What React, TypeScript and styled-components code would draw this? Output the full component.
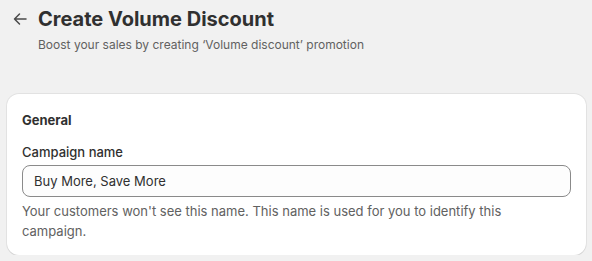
import styled, { createGlobalStyle } from "styled-components";

const GlobalStyle = createGlobalStyle`
  html, body {
    margin: 0;
    padding: 0;
    background: #f1f1f1;
    font-family: Inter, "Noto Sans", sans-serif;
    color: #303030;
  }
`;

const Page = styled.div`
  padding: 7px 6px 0 7px;
`;

const Header = styled.div`
  display: flex;
  align-items: flex-start;
  gap: 11px;
  margin-bottom: 39px;
  padding-left: 6px;
`;

const BackButton = styled.button`
  display: flex;
  align-items: center;
  justify-content: center;
  width: 14px;
  height: 24px;
  padding: 0;
  border: none;
  background: none;
  color: #4a4a4a;
  cursor: pointer;
`;

const TitleBlock = styled.div`
  display: flex;
  flex-direction: column;
`;

const Title = styled.h1`
  margin: 0;
  font-size: 20px;
  line-height: 24px;
  font-weight: 700;
  color: #303030;
`;

const Subtitle = styled.p`
  margin: 4px 0 0;
  font-size: 12px;
  line-height: 20px;
  color: #616161;
`;

const Card = styled.section`
  background: #fff;
  border-radius: 12px;
  box-shadow: 0 1px 0 0 rgba(26, 26, 26, 0.07), 0 0 0 1px rgba(0, 0, 0, 0.06);
  padding: 16px 15px 14px;
`;

const CardTitle = styled.h2`
  margin: 0 0 12px;
  font-size: 13px;
  line-height: 20px;
  font-weight: 650;
  color: #303030;
`;

const Label = styled.label`
  display: block;
  margin-bottom: 3px;
  font-size: 13px;
  line-height: 20px;
  font-weight: 550;
  color: #303030;
`;

const Input = styled.input`
  box-sizing: border-box;
  width: 100%;
  height: 32px;
  padding: 0 11px;
  border: 1px solid #8a8a8a;
  border-radius: 8px;
  background: #fdfdfd;
  font-family: inherit;
  font-size: 13px;
  color: #303030;
  outline: none;
`;

const HelpText = styled.p`
  max-width: 520px;
  margin: 4px 0 0;
  font-size: 13px;
  line-height: 20px;
  color: #616161;
`;

const ArrowLeft = () => (
  <svg width="14" height="14" viewBox="0 0 14 14" fill="none">
    <path
      d="M13 7H1.5M6.5 2 1.5 7l5 5"
      stroke="currentColor"
      strokeWidth="1.5"
      strokeLinecap="round"
      strokeLinejoin="round"
    />
  </svg>
);

export default function App() {
  return (
    <>
      <GlobalStyle />
      <Page>
        <Header>
          <BackButton aria-label="Back">
            <ArrowLeft />
          </BackButton>
          <TitleBlock>
            <Title>Create Volume Discount</Title>
            <Subtitle>Boost your sales by creating ‘Volume discount’ promotion</Subtitle>
          </TitleBlock>
        </Header>
        <Card>
          <CardTitle>General</CardTitle>
          <Label htmlFor="campaign">Campaign name</Label>
          <Input id="campaign" defaultValue="Buy More, Save More" />
          <HelpText>
            Your customers won't see this name. This name is used for you to identify this
            campaign.
          </HelpText>
        </Card>
      </Page>
    </>
  );
}
